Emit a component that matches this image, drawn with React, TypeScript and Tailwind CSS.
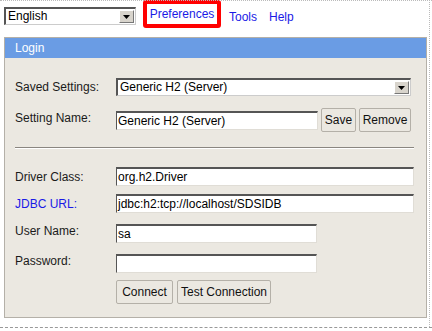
import React from "react";

const font = { fontFamily: '"Liberation Sans", Arial, sans-serif' };

function Arrow() {
  return (
    <div className="absolute right-[1px] top-[1px] bottom-[1px] w-[15px] bg-[#d8d4cc] border border-t-white border-l-white border-r-[#777] border-b-[#777] flex items-center justify-center">
      <svg width="7" height="4" viewBox="0 0 7 4">
        <path d="M0 0 L7 0 L3.5 4 Z" fill="#000" />
      </svg>
    </div>
  );
}

function Select({ w, value }: { w: string; value: string }) {
  return (
    <div className={`relative ${w} h-[18px] bg-white border-t-2 border-l-2 border-r border-b border-t-[#555] border-l-[#555] border-r-[#ccc] border-b-[#ccc] text-[12px] leading-[15px] pl-[2px] text-black`}>
      {value}
      <Arrow />
    </div>
  );
}

function Input({ w, value }: { w: string; value?: string }) {
  return (
    <div className={`${w} h-[19px] bg-white border-t-2 border-l border-r border-b border-t-[#555] border-l-[#555] border-r-[#e0ddd6] border-b-[#e0ddd6] text-[12px] leading-[16px] pl-[1px] text-black`}>
      {value}
    </div>
  );
}

function Btn({ children, w }: { children: React.ReactNode; w: string }) {
  return (
    <div className={`${w} h-[24px] border border-[#b4b0a8] rounded-[2px] bg-[#ebe8e1] flex items-center justify-center text-[12px] text-[#111]`}>
      {children}
    </div>
  );
}

export default function App() {
  return (
    <div className="relative w-[432px] h-[331px] bg-white overflow-hidden" style={font}>
      <div className="absolute left-0 right-0 top-0 border-t border-dotted border-[#bbb]" />
      <div className="absolute left-0 right-0 top-[327px] border-t border-dashed border-[#999]" />
      <div className="absolute top-0 bottom-[4px] left-[429px] border-l border-dotted border-[#bbb]" />

      <div className="flex items-start pl-[4px] h-[37px]">
        <div className="mt-[7px]">
          <Select w="w-[132px]" value="English" />
        </div>
        <div className="ml-[7px] w-[78px] h-[28px] border-[4px] border-[#ff0000] rounded-[3px] flex items-center justify-center text-[12px] text-[#1a1ae6] mt-0">
          Preferences
        </div>
        <div className="ml-[8px] mt-[8px] text-[12px] text-[#1a1ae6]">Tools</div>
        <div className="ml-[12px] mt-[8px] text-[12px] text-[#1a1ae6]">Help</div>
      </div>

      <div className="ml-[4px] w-[423px] h-[281px] border border-[#b4b0a8] bg-[#ebe8e1] flex flex-col">
        <div className="h-[20px] bg-[#6a9ce4] text-white text-[12px] leading-[20px] pl-[10px]">Login</div>
        <div className="flex flex-col pl-[10px] text-[12px] text-[#1a1a1a]">
          <div className="flex items-center mt-[20px] h-[18px]">
            <div className="w-[101px]">Saved Settings:</div>
            <Select w="w-[295px]" value="Generic H2 (Server)" />
          </div>
          <div className="flex items-center mt-[12px] h-[24px]">
            <div className="w-[101px] -mt-[4px]">Setting Name:</div>
            <Input w="w-[202px]" value="Generic H2 (Server)" />
            <div className="ml-[3px]"><Btn w="w-[35px]">Save</Btn></div>
            <div className="ml-[3px]"><Btn w="w-[52px]">Remove</Btn></div>
          </div>
          <div className="mt-[15px] w-[399px] h-[2px] border-t border-t-[#8a8680] border-b border-b-white" />
          <div className="flex items-center mt-[18px] h-[19px]">
            <div className="w-[101px]">Driver Class:</div>
            <Input w="w-[298px]" value="org.h2.Driver" />
          </div>
          <div className="flex items-center mt-[8px] h-[19px]">
            <div className="w-[101px] text-[#1a1ae6]">JDBC URL:</div>
            <Input w="w-[298px]" value="jdbc:h2:tcp://localhost/SDSIDB" />
          </div>
          <div className="flex items-center mt-[11px] h-[19px]">
            <div className="w-[101px] -mt-[6px]">User Name:</div>
            <Input w="w-[201px]" value="sa" />
          </div>
          <div className="flex items-center mt-[11px] h-[19px]">
            <div className="w-[101px] -mt-[6px]">Password:</div>
            <Input w="w-[201px]" />
          </div>
          <div className="flex mt-[7px] pl-[101px]">
            <Btn w="w-[57px]">Connect</Btn>
            <div className="ml-[4px]"><Btn w="w-[94px]">Test Connection</Btn></div>
          </div>
        </div>
      </div>
    </div>
  );
}
